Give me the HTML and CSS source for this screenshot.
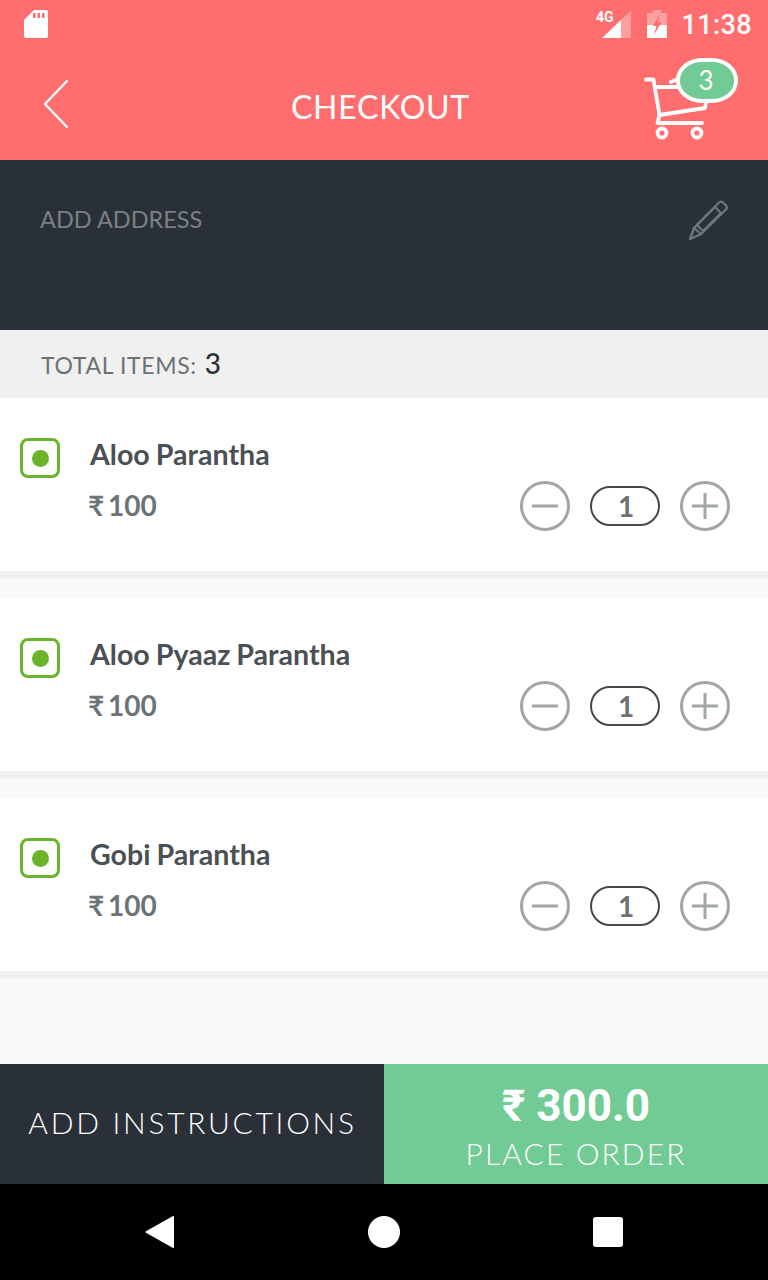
FILE: index.html
```html
<!DOCTYPE html>
<html lang="en">
<head>
<meta charset="utf-8">
<title>Checkout</title>
<link rel="stylesheet" href="styles.css">
</head>
<body>
<div class="screen">
  <header class="header">
    <div class="status">
      <svg class="sd" viewBox="0 0 24 28" width="24" height="28"><path fill="#fff" d="M10 0H22a2 2 0 0 1 2 2V26a2 2 0 0 1-2 2H2a2 2 0 0 1-2-2V10z"/><path fill="#ff6e6e" d="M9 3h2.500v5H9zM13.500 3H16v5h-2.500zM18 3h2.500v5H18z"/></svg>
      <div class="status-right">
        <svg class="signal" viewBox="0 0 36 30" width="36" height="30">
          <path fill="#fff" fill-opacity=".35" d="M36 1V28H26V10z"/>
          <path fill="#fff" d="M26 10V28H7z"/>
          <text x="1" y="12" class="net">4G</text>
        </svg>
        <svg class="battery" viewBox="0 0 20 28" width="20" height="28">
          <path fill="#fff" fill-opacity=".35" d="M6 0h8v3h6v13H0V3h6z"/>
          <path fill="#fff" d="M0 15H20V28H0z"/>
          <path fill="#ff6e6e" d="M13 4 6 16h3.500L7 25l7.500-13H11z"/>
        </svg>
        <span class="time">11:38</span>
      </div>
    </div>
    <div class="appbar">
      <svg class="back" viewBox="0 0 28 50" width="28" height="50"><path d="M25 2 3 25l22 23" fill="none" stroke="#fff" stroke-width="2.400" stroke-linecap="round" stroke-linejoin="round"/></svg>
      <h1 class="title">CHECKOUT</h1>
      <div class="cart">
        <svg viewBox="0 0 64 66" width="64" height="66">
          <g fill="none" stroke="#fff" stroke-width="3.800" stroke-linecap="round" stroke-linejoin="round">
            <path d="M2 4.500H9.500L15.500 40l-2 8H58"/>
            <path d="M11.500 12H36M62 27l-1 6-45.500 7"/>
            <path d="M27 7l7-3"/>
            <circle cx="18" cy="58" r="4.500"/>
            <circle cx="53" cy="58" r="4.500"/>
          </g>
        </svg>
        <span class="badge">3</span>
      </div>
    </div>
  </header>

  <section class="address">
    <span class="address-label">ADD ADDRESS</span>
    <svg class="pencil" viewBox="0 0 42 42" width="42" height="42">
      <g fill="none" stroke="#6f767a" stroke-width="2.300" stroke-linejoin="round" stroke-linecap="round">
        <path d="M31 3.500a3 3 0 0 1 4 0l3 3a3 3 0 0 1 0 4L13 35 2 40l4-11z"/>
        <path d="M6 29l7 6M27 8l6 6-18 18-6-6z"/>
      </g>
    </svg>
  </section>

  <div class="total"><span class="total-label">TOTAL ITEMS:</span><span class="total-count">3</span></div>

  <main class="items">
    <article class="item">
      <span class="veg"><span class="veg-dot"></span></span>
      <div class="item-body">
        <h2 class="item-name">Aloo Parantha</h2>
        <div class="item-row">
          <span class="price">₹ 100</span>
          <div class="qty">
            <svg class="qty-btn" viewBox="0 0 50 50" width="50" height="50"><circle cx="25" cy="25" r="23.500"/><path d="M12 25h26"/></svg>
            <span class="qty-value">1</span>
            <svg class="qty-btn" viewBox="0 0 50 50" width="50" height="50"><circle cx="25" cy="25" r="23.500"/><path d="M12 25h26M25 12v26"/></svg>
          </div>
        </div>
      </div>
    </article>
    <article class="item">
      <span class="veg"><span class="veg-dot"></span></span>
      <div class="item-body">
        <h2 class="item-name">Aloo Pyaaz Parantha</h2>
        <div class="item-row">
          <span class="price">₹ 100</span>
          <div class="qty">
            <svg class="qty-btn" viewBox="0 0 50 50" width="50" height="50"><circle cx="25" cy="25" r="23.500"/><path d="M12 25h26"/></svg>
            <span class="qty-value">1</span>
            <svg class="qty-btn" viewBox="0 0 50 50" width="50" height="50"><circle cx="25" cy="25" r="23.500"/><path d="M12 25h26M25 12v26"/></svg>
          </div>
        </div>
      </div>
    </article>
    <article class="item">
      <span class="veg"><span class="veg-dot"></span></span>
      <div class="item-body">
        <h2 class="item-name">Gobi Parantha</h2>
        <div class="item-row">
          <span class="price">₹ 100</span>
          <div class="qty">
            <svg class="qty-btn" viewBox="0 0 50 50" width="50" height="50"><circle cx="25" cy="25" r="23.500"/><path d="M12 25h26"/></svg>
            <span class="qty-value">1</span>
            <svg class="qty-btn" viewBox="0 0 50 50" width="50" height="50"><circle cx="25" cy="25" r="23.500"/><path d="M12 25h26M25 12v26"/></svg>
          </div>
        </div>
      </div>
    </article>
  </main>

  <footer class="footer">
    <div class="instructions">ADD INSTRUCTIONS</div>
    <div class="order">
      <span class="order-total">₹ 300.0</span>
      <span class="order-label">PLACE ORDER</span>
    </div>
  </footer>

  <nav class="navbar">
    <svg viewBox="0 0 30 34" width="30" height="34"><path fill="#fff" stroke="#fff" stroke-width="2" stroke-linejoin="round" d="M1.500 17 28 2v30z"/></svg>
    <span class="nav-home"></span>
    <span class="nav-recent"></span>
  </nav>
</div>
</body>
</html>
```

FILE: styles.css
```css
* { box-sizing: border-box; }
html, body { margin: 0; padding: 0; }
body { width: 768px; height: 1280px; overflow: hidden; font-family: "Lato", "Liberation Sans", sans-serif; }
h1, h2 { margin: 0; font-weight: inherit; }

.screen { width: 768px; height: 1280px; display: flex; flex-direction: column; background: #f9f9f9; }

.header { height: 160px; background: #ff6e6e; display: flex; flex-direction: column; flex: none; }
.status { height: 48px; padding: 10px 16px 0 24px; display: flex; justify-content: space-between; align-items: flex-start; }
.status-right { display: flex; align-items: flex-start; }
.signal { margin-right: 16px; }
.net { font: 700 14px "Roboto", sans-serif; fill: #fff; }
.battery { margin-right: 14px; }
.time { font: 500 27px/30px "Roboto", sans-serif; color: #fff; letter-spacing: .4px; }

.appbar { height: 112px; position: relative; display: flex; align-items: center; justify-content: center; }
.back { position: absolute; left: 42px; top: 31px; }
.title { font: 400 32px/40px "Lato", sans-serif; color: #fff; margin: 5px 7px 0 0; letter-spacing: .75px; }
.cart { position: absolute; left: 644px; top: 10px; width: 96px; height: 84px; }
.cart svg { position: absolute; left: 0; top: 17px; }
.badge { position: absolute; left: 32px; top: 0; width: 62px; height: 45px; border-radius: 26px / 22px; background: #72cb95; border: 4px solid #fff; color: #fff; font: 400 26px/37px "Lato", sans-serif; text-align: center; padding-right: 2px; }

.address { height: 170px; flex: none; background: #2a3037; padding: 43px 40px 0; display: flex; justify-content: space-between; align-items: flex-start; }
.address-label { font: 400 23.500px/32px "Lato", sans-serif; color: #7a8083; }
.pencil { margin-top: -4px; margin-right: -2px; }

.total { height: 68px; flex: none; background: #f0f0f0; padding: 1px 40px 0 41px; display: flex; align-items: center; gap: 8px; }
.total-label { font: 400 23px/32px "Lato", sans-serif; color: #6c7274; letter-spacing: .65px; }
.total-count { font: 500 28px/32px "Lato", sans-serif; color: #2a3037; margin-top: -3px; }

.items { flex: 1; display: flex; flex-direction: column; gap: 20px; }
.item { height: 180px; background: #fff; border-bottom: 7px solid #f0f0f0; padding: 40px 38px 0 20px; display: flex; }
.veg { width: 40px; height: 40px; border: 3px solid #6ab32a; border-radius: 8px; display: flex; align-items: center; justify-content: center; flex: none; }
.veg-dot { width: 17px; height: 17px; border-radius: 50%; background: #6ab32a; }
.item-body { flex: 1; margin-left: 30px; }
.item-name { font: 700 28.600px/34px "Lato", sans-serif; color: #4a5054; margin-top: -1px; word-spacing: -1px; }
.item-row { display: flex; justify-content: space-between; align-items: center; margin-top: 10px; margin-left: -2px; }
.price { font: 700 28px/34px "Lato", "Noto Sans", sans-serif; color: #6c7477; word-spacing: -3px; margin-top: -2px; }
.qty { display: flex; align-items: center; gap: 20px; }
.qty-btn { display: block; fill: none; stroke: #a0a6a5; stroke-width: 3; }
.qty-value { width: 70px; height: 40px; border: 2px solid #45494c; border-radius: 20px; padding-left: 2px; display: flex; align-items: center; justify-content: center; font: 700 28px/1 "Lato", sans-serif; color: #6f7173; }

.footer { height: 120px; flex: none; display: flex; }
.instructions { width: 384px; padding: 0 0 4px 1px; background: #2a3037; color: #fff; font: 300 30px/1 "Lato", sans-serif; letter-spacing: 2.700px; display: flex; align-items: center; justify-content: center; white-space: nowrap; }
.order { width: 384px; background: #72cb95; color: #fff; display: flex; flex-direction: column; align-items: center; }
.order-total { font: 700 44px/50px "Roboto", sans-serif; margin-top: 17px; }
.order-label { font: 300 30px/36px "Lato", sans-serif; letter-spacing: 2.100px; margin-top: 4px; }

.navbar { height: 96px; flex: none; background: #000; display: flex; align-items: center; justify-content: space-between; padding: 0 145px; }
.nav-home { width: 32px; height: 32px; border-radius: 50%; background: #fff; }
.nav-recent { width: 30px; height: 30px; border-radius: 3px; background: #fff; }
```
